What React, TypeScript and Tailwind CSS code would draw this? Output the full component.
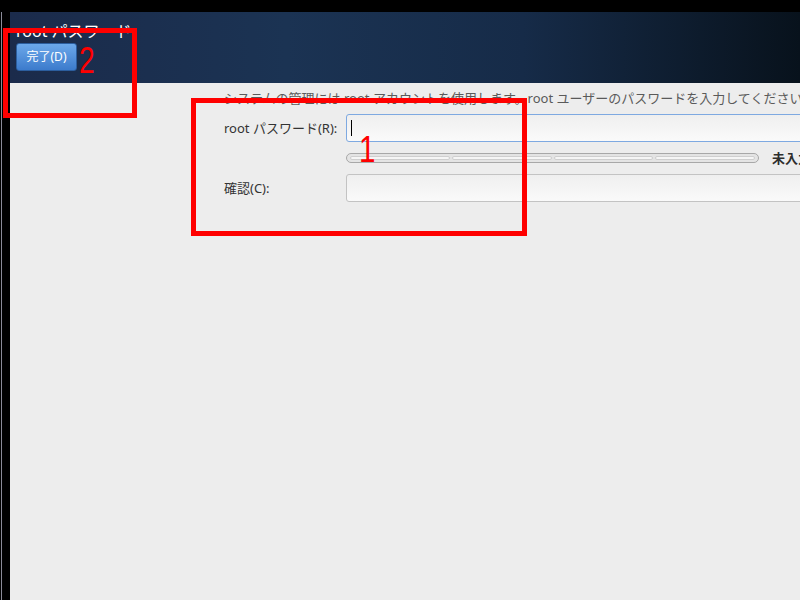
const font = { fontFamily: '"Noto Sans", "Noto Sans CJK JP", sans-serif' };

const StrengthBar = () => (
  <div className="flex h-[10px] w-[413px] gap-[2px] rounded-full border border-[#a8a8a8] bg-[#e4e4e4] px-[3px] py-[2px]">
    {[0, 1, 2, 3].map((i) => (
      <div key={i} className="h-[4px] flex-1 rounded-full border border-[#cfcfcf] bg-[#f6f6f6]" />
    ))}
  </div>
);

const Entry = ({ focused }: { focused?: boolean }) => (
  <div
    className={`relative h-[28px] w-[470px] rounded-[3px] border bg-gradient-to-b from-[#efefef] to-[#fafafa] ${
      focused ? "border-[#7ea9e1]" : "border-[#c3c3c3]"
    }`}
  >
    {focused && <div className="absolute left-[4px] top-[5px] h-[16px] w-px bg-black" />}
  </div>
);

export default function App() {
  return (
    <div className="relative flex h-[600px] w-[800px] overflow-hidden bg-black" style={font}>
      {/* left frame */}
      <div className="flex w-[10px] shrink-0">
        <div className="ml-[1px] mt-[12px] w-px bg-[#8b8b99]" />
      </div>

      <div className="flex min-w-0 flex-1 flex-col pt-[12px]">
        {/* header */}
        <header className="flex h-[71px] shrink-0 flex-col bg-[linear-gradient(90deg,#1b2b4b_0%,#1b3353_35%,#162b48_65%,#08121c_100%)] px-[6px] pt-[9px]">
          <h1 className="text-[16px] leading-[20px] text-white">root パスワード</h1>
          <button className="mt-[2px] flex h-[28px] w-[61px] items-center justify-center rounded-[3px] border border-[#2c5e9e] bg-gradient-to-b from-[#6ca8ea] to-[#3c7bcc] text-[12px] text-white">
            完了(D)
          </button>
        </header>

        {/* content */}
        <main className="flex-1 overflow-hidden bg-[#ededed] pl-[214px] pt-[7px]">
          <p className="whitespace-nowrap text-[13px] leading-[16px] text-[#5a5a5a]">
            システムの管理には root アカウントを使用します。root ユーザーのパスワードを入力してください。
          </p>
          <div className="mt-[8px] grid grid-cols-[122px_auto] grid-rows-[28px_10px_28px] items-center gap-y-[11px] whitespace-nowrap text-[13px] leading-[16px] text-[#333]">
            <span>root パスワード(R):</span>
            <Entry focused />
            <span />
            <div className="flex h-[10px] items-center gap-[13px]">
              <StrengthBar />
              <span className="font-semibold text-[#2e2e2e]">未入力</span>
            </div>
            <span>確認(C):</span>
            <Entry />
          </div>
        </main>
      </div>

      {/* annotations */}
      <div className="pointer-events-none absolute left-[3px] top-[28px] h-[90px] w-[134px] border-[5px] border-[#ff0000]" />
      <div className="pointer-events-none absolute left-[191px] top-[98px] h-[138px] w-[336px] border-[5px] border-[#ff0000]" />
      <span className="absolute left-[79px] top-[41px] origin-left scale-x-[0.76] font-['Liberation_Sans'] text-[37px] leading-[40px] text-[#ff0000]">
        2
      </span>
      <span className="absolute left-[359px] top-[130px] origin-left scale-x-[0.8] font-['Liberation_Sans'] text-[37px] leading-[40px] text-[#ff0000]">
        1
      </span>
    </div>
  );
}
